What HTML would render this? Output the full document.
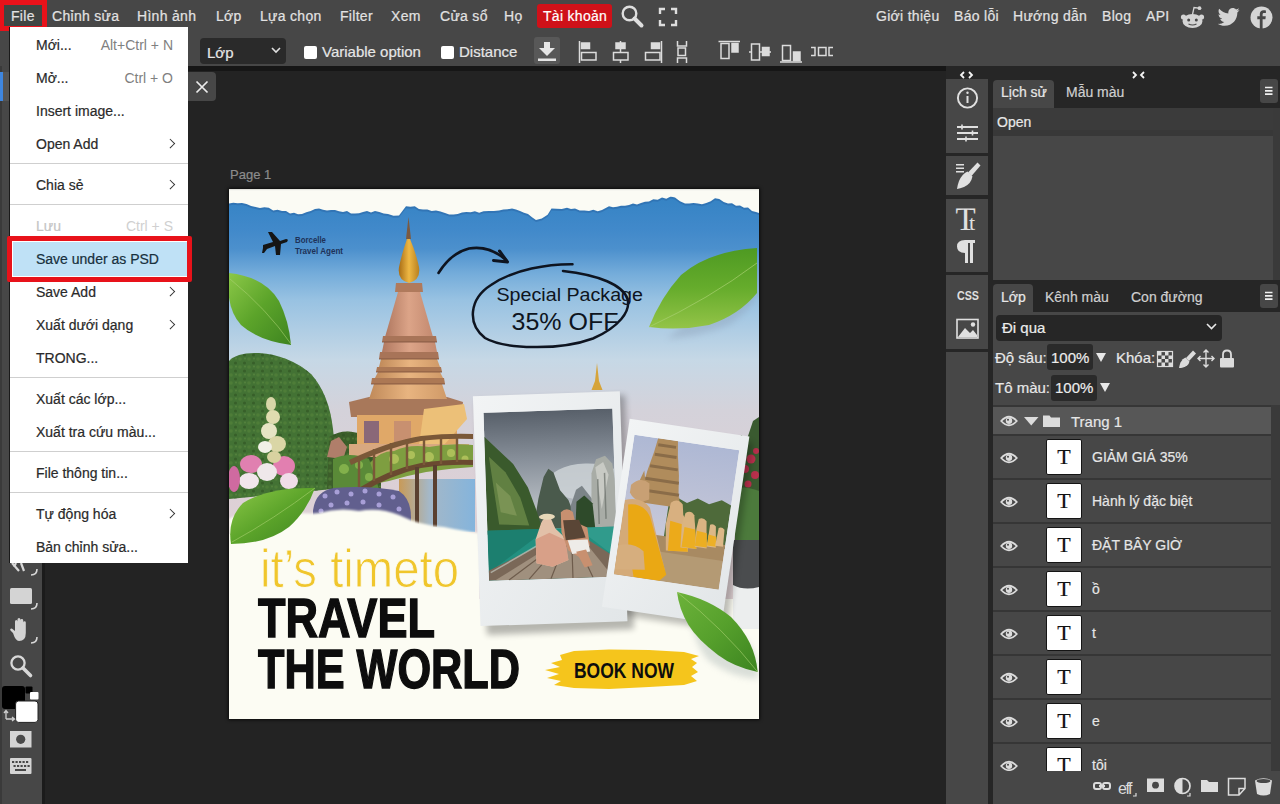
<!DOCTYPE html>
<html><head><meta charset="utf-8">
<style>
*{box-sizing:border-box;margin:0;padding:0}
html,body{width:1280px;height:804px;overflow:hidden;background:#232323;font-family:"Liberation Sans",sans-serif;position:relative}
.a{position:absolute}
.t{position:absolute;white-space:nowrap;line-height:1;font-size:14px;-webkit-text-stroke:0.2px currentColor}
#top{left:0;top:0;width:1280px;height:32px;background:#474747}
#opt{left:0;top:32px;width:1280px;height:34px;background:#474747}
#optline{left:0;top:66px;width:1280px;height:5px;background:#161616}
.mt{color:#e2e2e2;top:9px;letter-spacing:0.3px}
#ltool{left:0;top:66px;width:42px;height:738px;background:#474747}
#ltool2{left:0;top:66px;width:2px;height:738px;background:#3a3a3a}
#menu{left:10px;top:27px;width:178px;height:536px;background:#fff}
.mi{position:absolute;left:26px;color:#2a2a2a;font-size:14px;line-height:1;white-space:nowrap;-webkit-text-stroke:0.2px currentColor}
.sc{position:absolute;right:15px;color:#808080;font-size:14px;line-height:1;white-space:nowrap}
.sep{position:absolute;left:0;width:178px;height:1px;background:#cfcfcf}
.arr{position:absolute;left:156.5px;width:6.5px;height:6.5px;border-right:1.9px solid #333;border-top:1.9px solid #333;transform:rotate(45deg)}
</style></head><body>
<!-- TOP MENU BAR -->
<div id="top" class="a"></div>
<div class="a" style="left:0;top:0;width:47px;height:31px;background:#e8121a;border-radius:0 0 4px 0"></div>
<div class="a" style="left:4px;top:5px;width:38px;height:21px;background:#3f4542"></div>
<div class="t mt" style="left:11px">File</div>
<div class="t mt" style="left:52px">Chỉnh sửa</div>
<div class="t mt" style="left:137px">Hình ảnh</div>
<div class="t mt" style="left:216px">Lớp</div>
<div class="t mt" style="left:260px">Lựa chọn</div>
<div class="t mt" style="left:340px">Filter</div>
<div class="t mt" style="left:391px">Xem</div>
<div class="t mt" style="left:440px">Cửa sổ</div>
<div class="t mt" style="left:504px">Họ</div>
<div class="a" style="left:536.5px;top:3.5px;width:75.5px;height:24.5px;background:#cf1119;border-radius:3px"></div>
<div class="t mt" style="left:543px;color:#fff">Tài khoản</div>
<div class="t mt" style="left:876px">Giới thiệu</div>
<div class="t mt" style="left:954px">Báo lỗi</div>
<div class="t mt" style="left:1013px">Hướng dẫn</div>
<div class="t mt" style="left:1102px">Blog</div>
<div class="t mt" style="left:1146px">API</div>
<svg class="a" style="left:618px;top:2px" width="30" height="30" viewBox="0 0 30 30"><circle cx="11.5" cy="11.5" r="6.8" fill="none" stroke="#dedede" stroke-width="2.4"/><path d="M16.5 16.5 L23.5 23.5" stroke="#dedede" stroke-width="4" stroke-linecap="round"/></svg>
<svg class="a" style="left:656px;top:5px" width="24" height="24" viewBox="0 0 24 24" fill="none" stroke="#dedede" stroke-width="2.4"><path d="M4 9 V4 H9 M15 4 H20 V9 M20 15 V20 H15 M9 20 H4 V15"/></svg>
<svg class="a" style="left:1180px;top:5px" width="26" height="25" viewBox="0 0 26 25"><ellipse cx="12.5" cy="16" rx="10" ry="7" fill="#d4d4d4"/><circle cx="3.5" cy="12" r="2.6" fill="#d4d4d4"/><circle cx="21.5" cy="12" r="2.6" fill="#d4d4d4"/><circle cx="19.5" cy="3.2" r="1.9" fill="#d4d4d4"/><path d="M12.5 9.5 L14 2.5 L19 3.2" stroke="#d4d4d4" stroke-width="1.3" fill="none"/><circle cx="8.7" cy="15" r="1.5" fill="#474747"/><circle cx="16.3" cy="15" r="1.5" fill="#474747"/><path d="M8.5 19 Q12.5 21 16.5 19" stroke="#474747" stroke-width="1.1" fill="none"/></svg>
<svg class="a" style="left:1218px;top:7px" width="22" height="20" viewBox="0 0 24 20"><path fill="#d4d4d4" d="M23.5 2.4c-.9.4-1.8.6-2.8.8 1-.6 1.8-1.5 2.1-2.7-.9.6-2 1-3.1 1.2C18.8.7 17.5.1 16.1.1c-2.7 0-4.9 2.2-4.9 4.9 0 .4 0 .8.1 1.1C7.3 5.9 3.7 4 1.3 1 .9 1.7.6 2.6.6 3.5c0 1.7.9 3.2 2.2 4.1-.8 0-1.6-.2-2.2-.6v.1c0 2.4 1.7 4.4 3.9 4.8-.4.1-.8.2-1.3.2-.3 0-.6 0-.9-.1.6 2 2.4 3.4 4.6 3.4-1.7 1.3-3.8 2.1-6.1 2.1-.4 0-.8 0-1.2-.1 2.2 1.4 4.8 2.2 7.5 2.2 9.1 0 14-7.5 14-14v-.6c1-.7 1.8-1.6 2.4-2.6z"/></svg>
<svg class="a" style="left:1250px;top:6px" width="23" height="23" viewBox="0 0 23 23"><circle cx="11.5" cy="11.5" r="11" fill="#d4d4d4"/><path d="M12.6 23 V13.2 H15.4 L15.8 10.3 H12.6 V8.4 C12.6 7.5 12.9 6.9 14.1 6.9 H15.9 V4.4 C15.5 4.3 14.6 4.2 13.6 4.2 C11.3 4.2 9.8 5.6 9.8 8.1 V10.3 H7.3 V13.2 H9.8 V23 Z" fill="#474747"/></svg>


<!-- OPTIONS BAR -->
<div id="opt" class="a"></div>
<div class="a" style="left:200px;top:37.5px;width:86px;height:26.5px;background:#2a2a2a;border-radius:4px"></div>
<div class="t" style="left:207px;top:44.5px;color:#e6e6e6;font-size:15px">Lớp</div>
<svg class="a" style="left:270px;top:46px" width="12" height="8" viewBox="0 0 12 8"><path d="M2 2 L6 6 L10 2" fill="none" stroke="#e0e0e0" stroke-width="1.6"/></svg>
<div class="a" style="left:304px;top:45.5px;width:13px;height:13px;background:#fff;border-radius:2px"></div>
<div class="t" style="left:322px;top:44px;color:#e6e6e6;font-size:15px">Variable option</div>
<div class="a" style="left:441px;top:45.5px;width:13px;height:13px;background:#fff;border-radius:2px"></div>
<div class="t" style="left:459px;top:44px;color:#e6e6e6;font-size:15px">Distance</div>
<div class="a" style="left:534px;top:37px;width:26px;height:27px;background:#585858;border-radius:3px"></div>
<svg class="a" style="left:534px;top:37px" width="26" height="27" viewBox="0 0 26 27" fill="#e6e6e6"><path d="M10 5 H16 V11 H21 L13 19 L5 11 H10 Z"/><rect x="4" y="21.5" width="18" height="2.5"/></svg>
<svg class="a" style="left:575px;top:38px" width="270" height="28" viewBox="575 38 270 28" fill="none" stroke="#dcdcdc" stroke-width="1.5">
<path d="M579.5 41 V63"/><rect x="581.5" y="43" width="8" height="5.5" fill="#dcdcdc"/><rect x="581.5" y="52.5" width="14.5" height="7.5"/>
<path d="M620.5 41 V63"/><rect x="616" y="43" width="9" height="5.5" fill="#dcdcdc"/><rect x="613.5" y="52.5" width="14.5" height="7.5" fill="#474747"/>
<path d="M661.5 41 V63"/><rect x="651.5" y="43" width="8" height="5.5" fill="#dcdcdc"/><rect x="645.5" y="52.5" width="14.5" height="7.5"/>
<path d="M677.5 41 V46 H686.5 V41 M677.5 63 V58 H686.5 V63"/><rect x="678" y="48" width="7.5" height="7.5"/>
<path d="M718.5 41.5 H740"/><rect x="721" y="43.5" width="8" height="15"/><rect x="732" y="43.5" width="6" height="8.5" fill="#dcdcdc"/>
<path d="M749 52 H771"/><rect x="751.5" y="44" width="8" height="16" fill="#474747"/><rect x="762.5" y="47.5" width="6.5" height="8" fill="#dcdcdc"/>
<path d="M780 62 H802"/><rect x="782.5" y="45.5" width="8" height="15"/><rect x="793.5" y="52" width="6.5" height="8.5" fill="#dcdcdc"/>
<path d="M811 47.5 H815 V55.5 H811 M833 47.5 H829 V55.5 H833"/><rect x="818.5" y="47.5" width="7.5" height="8"/>
</svg>
<div id="optline" class="a"></div>

<!-- LEFT TOOLBAR -->
<div id="ltool" class="a"></div>
<div id="ltool2" class="a"></div>
<div class="a" style="left:0;top:72px;width:42px;height:29px;background:#555"></div>
<div class="a" style="left:0;top:72px;width:3px;height:29px;background:#3e86e0"></div>
<div class="a" style="left:9px;top:27px;width:1px;height:536px;background:#1a1a1a"></div>
<svg class="a" style="left:0;top:560px" width="42" height="220" viewBox="0 560 42 220">
<path d="M12 563 L19 571 M21 563 L24 571 M16 563 L14 567" stroke="#d8d8d8" stroke-width="2.2" fill="none"/>
<path d="M37 569 Q37 575 31 575" stroke="#d8d8d8" stroke-width="1.6" fill="none"/>
<rect x="10" y="588" width="22" height="16" rx="1.5" fill="#d4d4d4"/>
<path d="M37 603 Q37 609 31 609" stroke="#d8d8d8" stroke-width="1.6" fill="none"/>
<path d="M13 633 L10.5 630.5 Q9.5 628.5 11.8 628.4 L15 631 V621.5 Q15 620 16.3 620 Q17.5 620 17.5 621.5 V628 V619.5 Q17.5 618 19 618 Q20.4 618 20.4 619.5 V628 V620.3 Q20.4 619 21.8 619 Q23.2 619 23.2 620.3 V628 V622.5 Q23.2 621.2 24.5 621.2 Q25.8 621.2 25.8 622.5 V633 Q25.8 641 19 641 Q15.5 641 13 633 Z" fill="#d4d4d4"/>
<path d="M37 637 Q37 643 31 643" stroke="#d8d8d8" stroke-width="1.6" fill="none"/>
<circle cx="18" cy="663" r="6.6" fill="none" stroke="#d8d8d8" stroke-width="2.3"/>
<path d="M23 668 L30.5 675.5" stroke="#d8d8d8" stroke-width="3.6" stroke-linecap="round"/>
<rect x="2" y="686" width="23" height="23" rx="3" fill="#000"/>
<rect x="25.5" y="686.5" width="7" height="7" rx="1" fill="#000"/>
<rect x="30" y="692" width="8.5" height="7.5" rx="1" fill="#fff"/>
<rect x="15.6" y="701" width="22.4" height="21.4" rx="3" fill="#fff" stroke="#222" stroke-width="1"/>
<path d="M6 719 V711 M4 713 L6 710.5 L8 713 M6 719 H14 M12 717 L14.5 719 L12 721" stroke="#cfcfcf" stroke-width="1.3" fill="none"/>
<rect x="10" y="731" width="21.5" height="16.5" fill="#d4d4d4"/>
<circle cx="20.7" cy="739.3" r="4.6" fill="#4a4a4a"/>
<rect x="10" y="758" width="21.5" height="16" rx="1" fill="#d4d4d4"/>
<g fill="#474747"><rect x="12" y="761" width="2.2" height="2"/><rect x="15.5" y="761" width="2.2" height="2"/><rect x="19" y="761" width="2.2" height="2"/><rect x="22.5" y="761" width="2.2" height="2"/><rect x="26" y="761" width="2.2" height="2"/>
<rect x="13.5" y="765" width="2.2" height="2"/><rect x="17" y="765" width="2.2" height="2"/><rect x="20.5" y="765" width="2.2" height="2"/><rect x="24" y="765" width="2.2" height="2"/><rect x="27.5" y="765" width="2.2" height="2"/>
<rect x="15" y="769" width="11" height="2"/></g>
</svg>
<div class="a" style="left:42px;top:66px;width:3px;height:738px;background:#1b1b1b"></div>
<!-- CANVAS AREA -->
<div class="a" style="left:188px;top:72px;width:28px;height:29px;background:#474747;border-radius:0 4px 4px 0"></div>
<svg class="a" style="left:194px;top:79px" width="16" height="16" viewBox="0 0 16 16"><path d="M2.5 2.5 L13.5 13.5 M13.5 2.5 L2.5 13.5" stroke="#ececec" stroke-width="1.7"/></svg>
<div class="t" style="left:230px;top:168px;color:#8c8c8c;font-size:13px">Page 1</div>
<div id="poster" class="a" style="left:229px;top:189px;width:530px;height:530px;background:#fbfbf3;overflow:hidden;box-shadow:0 0 3px 1px rgba(0,0,0,0.7)"><!--POSTER-->
<svg width="530" height="530" viewBox="0 0 530 530" style="position:absolute;left:0;top:0">
<defs>
<linearGradient id="sky" x1="0" y1="0" x2="0" y2="1">
<stop offset="0" stop-color="#3583c4"/><stop offset="0.08" stop-color="#4189ca"/><stop offset="0.129" stop-color="#4c90cd"/><stop offset="0.19" stop-color="#74acda"/><stop offset="0.256" stop-color="#98c2e2"/><stop offset="0.405" stop-color="#c6d8e6"/><stop offset="0.53" stop-color="#d4d2da"/><stop offset="0.726" stop-color="#dcd0d6"/><stop offset="1" stop-color="#e2d4d6"/>
</linearGradient>
<linearGradient id="tower" x1="0" y1="0" x2="1" y2="0">
<stop offset="0" stop-color="#b07860"/><stop offset="0.5" stop-color="#dca488"/><stop offset="1" stop-color="#c48a70"/>
</linearGradient>
<linearGradient id="tower2" x1="0" y1="0" x2="1" y2="0">
<stop offset="0" stop-color="#c08a5a"/><stop offset="0.5" stop-color="#e8b480"/><stop offset="1" stop-color="#d09a68"/>
</linearGradient>
<linearGradient id="gold" x1="0" y1="0" x2="1" y2="0">
<stop offset="0" stop-color="#a86c14"/><stop offset="0.5" stop-color="#eeb844"/><stop offset="1" stop-color="#b88020"/>
</linearGradient>
<linearGradient id="leafR" x1="0" y1="0" x2="0" y2="1">
<stop offset="0" stop-color="#4e9a22"/><stop offset="0.5" stop-color="#66ac2c"/><stop offset="1" stop-color="#94c448"/>
</linearGradient>
<linearGradient id="leafR2" x1="0" y1="0" x2="1" y2="1"><stop offset="0" stop-color="#6cb23a"/><stop offset="0.5" stop-color="#56a02c"/><stop offset="1" stop-color="#3c8420"/></linearGradient>
<linearGradient id="leafL" x1="0" y1="0" x2="1" y2="1">
<stop offset="0" stop-color="#8cc848"/><stop offset="0.5" stop-color="#5ca42a"/><stop offset="1" stop-color="#3e8420"/>
</linearGradient>
<linearGradient id="p1sky" x1="0" y1="0" x2="0" y2="1">
<stop offset="0" stop-color="#58606a"/><stop offset="0.3" stop-color="#8a929c"/><stop offset="0.55" stop-color="#b4bac0"/><stop offset="0.7" stop-color="#c8ccd0"/>
</linearGradient>
<linearGradient id="p2sky" x1="0" y1="0" x2="0" y2="1">
<stop offset="0" stop-color="#aeb8d4"/><stop offset="1" stop-color="#d4d0da"/>
</linearGradient>
<linearGradient id="water" x1="0" y1="0" x2="1" y2="0">
<stop offset="0" stop-color="#c89a58"/><stop offset="0.4" stop-color="#a4b8c8"/><stop offset="1" stop-color="#84b4dc"/>
</linearGradient>
<linearGradient id="frame" x1="0" y1="0" x2="1" y2="1">
<stop offset="0" stop-color="#f2f4f5"/><stop offset="1" stop-color="#e2e6e8"/>
</linearGradient>
<pattern id="hedgetex" width="9" height="8" patternUnits="userSpaceOnUse"><circle cx="2" cy="2" r="1.8" fill="#55843a" opacity="0.6"/><circle cx="6.5" cy="6" r="1.6" fill="#2e5222" opacity="0.6"/><circle cx="7" cy="1.5" r="1" fill="#6e9848" opacity="0.4"/></pattern>
<filter id="blur1" x="-20%" y="-20%" width="140%" height="140%"><feGaussianBlur stdDeviation="3"/></filter>
<filter id="blur2" x="-20%" y="-20%" width="140%" height="140%"><feGaussianBlur stdDeviation="1.2"/></filter>
</defs>
<rect x="0" y="0" width="530" height="530" fill="#fcfcf3"/>
<rect x="0" y="8" width="530" height="402" fill="url(#sky)"/>
<!-- torn top paper -->
<path d="M0 0 H530 L530.0 24.0 L527.0 23.0 L523.0 22.0 L519.0 18.6 L515.0 18.7 L511.0 16.6 L507.0 16.7 L503.0 14.3 L499.0 14.6 L494.7 13.1 L490.3 10.0 L486.0 9.3 L481.7 12.2 L477.3 13.9 L473.0 15.3 L468.8 14.6 L464.5 14.1 L460.2 14.6 L456.0 14.6 L451.0 12.3 L446.0 8.6 L441.7 7.6 L437.3 9.8 L433.0 8.6 L428.7 10.8 L424.3 10.2 L420.0 12.6 L416.0 12.8 L412.0 14.1 L408.0 15.4 L404.0 14.6 L400.0 16.0 L396.0 16.8 L392.0 16.7 L388.0 17.8 L384.0 18.2 L380.0 17.3 L373.0 21.0 L368.7 22.2 L364.3 20.8 L360.0 21.9 L355.3 21.5 L350.7 21.5 L346.0 19.5 L342.0 20.0 L338.0 18.8 L332.8 20.1 L327.7 19.7 L322.5 19.5 L318.6 25.8 L312.8 29.4 L307.0 31.0 L303.0 28.2 L299.0 25.0 L295.0 23.8 L291.0 21.9 L287.0 20.6 L283.0 19.5 L278.7 20.2 L274.3 20.4 L270.0 21.5 L264.8 22.1 L259.7 21.9 L254.5 22.3 L250.2 23.7 L245.9 22.2 L241.6 23.2 L237.3 22.9 L233.0 23.4 L228.7 25.0 L224.5 25.6 L220.2 25.4 L216.0 24.0 L211.5 22.6 L207.0 21.5 L202.7 21.9 L198.3 20.6 L194.0 20.6 L189.9 19.9 L185.8 17.2 L181.4 17.7 L177.0 17.2 L170.0 26.5 L164.5 26.7 L159.0 25.0 L154.7 24.5 L150.3 22.9 L146.0 22.0 L142.0 23.4 L138.0 21.9 L134.0 23.1 L130.0 24.3 L126.0 24.6 L122.0 24.5 L118.0 22.1 L114.0 22.9 L110.0 22.3 L106.0 21.0 L102.0 20.9 L98.0 21.5 L94.0 20.7 L90.0 19.4 L86.0 20.0 L81.7 22.0 L77.3 23.3 L73.0 25.0 L69.0 25.2 L65.0 23.7 L61.0 24.4 L57.0 22.0 L53.0 22.0 L48.6 20.8 L44.2 21.5 L39.8 18.8 L35.4 18.3 L31.0 19.0 L26.6 18.0 L22.1 16.9 L17.5 15.0 L13.0 14.0 L8.7 14.3 L4.3 13.8 L0.0 14.6 Z" fill="#2c68a8" opacity="0.55" transform="translate(0 2)"/>
<path d="M0 0 H530 L530.0 24.0 L527.0 23.0 L523.0 22.0 L519.0 18.6 L515.0 18.7 L511.0 16.6 L507.0 16.7 L503.0 14.3 L499.0 14.6 L494.7 13.1 L490.3 10.0 L486.0 9.3 L481.7 12.2 L477.3 13.9 L473.0 15.3 L468.8 14.6 L464.5 14.1 L460.2 14.6 L456.0 14.6 L451.0 12.3 L446.0 8.6 L441.7 7.6 L437.3 9.8 L433.0 8.6 L428.7 10.8 L424.3 10.2 L420.0 12.6 L416.0 12.8 L412.0 14.1 L408.0 15.4 L404.0 14.6 L400.0 16.0 L396.0 16.8 L392.0 16.7 L388.0 17.8 L384.0 18.2 L380.0 17.3 L373.0 21.0 L368.7 22.2 L364.3 20.8 L360.0 21.9 L355.3 21.5 L350.7 21.5 L346.0 19.5 L342.0 20.0 L338.0 18.8 L332.8 20.1 L327.7 19.7 L322.5 19.5 L318.6 25.8 L312.8 29.4 L307.0 31.0 L303.0 28.2 L299.0 25.0 L295.0 23.8 L291.0 21.9 L287.0 20.6 L283.0 19.5 L278.7 20.2 L274.3 20.4 L270.0 21.5 L264.8 22.1 L259.7 21.9 L254.5 22.3 L250.2 23.7 L245.9 22.2 L241.6 23.2 L237.3 22.9 L233.0 23.4 L228.7 25.0 L224.5 25.6 L220.2 25.4 L216.0 24.0 L211.5 22.6 L207.0 21.5 L202.7 21.9 L198.3 20.6 L194.0 20.6 L189.9 19.9 L185.8 17.2 L181.4 17.7 L177.0 17.2 L170.0 26.5 L164.5 26.7 L159.0 25.0 L154.7 24.5 L150.3 22.9 L146.0 22.0 L142.0 23.4 L138.0 21.9 L134.0 23.1 L130.0 24.3 L126.0 24.6 L122.0 24.5 L118.0 22.1 L114.0 22.9 L110.0 22.3 L106.0 21.0 L102.0 20.9 L98.0 21.5 L94.0 20.7 L90.0 19.4 L86.0 20.0 L81.7 22.0 L77.3 23.3 L73.0 25.0 L69.0 25.2 L65.0 23.7 L61.0 24.4 L57.0 22.0 L53.0 22.0 L48.6 20.8 L44.2 21.5 L39.8 18.8 L35.4 18.3 L31.0 19.0 L26.6 18.0 L22.1 16.9 L17.5 15.0 L13.0 14.0 L8.7 14.3 L4.3 13.8 L0.0 14.6 Z" fill="#fbfbf4"/>
<rect x="0" y="0" width="530" height="1.2" fill="#e4e4de"/>
<!-- right dark tree strip -->
<path d="M506 262 L512 246 L518 250 L524 232 L530 228 V405 H506 Z" fill="#3a5a30"/>
<g fill="#b8304c"><circle cx="522" cy="270" r="4.5"/><circle cx="516" cy="280" r="4"/><circle cx="526" cy="286" r="4"/><circle cx="519" cy="295" r="3.5"/><circle cx="527" cy="262" r="3"/></g>
<path d="M506 300 Q515 296 530 302 V352 H506 Z" fill="#4c7a3c"/>
<rect x="504" y="351" width="26" height="50" fill="#4a4c4e"/>
<path d="M504 396 Q515 402 530 398 V440 H504 Z" fill="#eceeee"/>
<!-- small spire right -->
<path d="M368 174 L366 192 L362.5 201 H373.5 L370 192 Z" fill="#d6a43a"/>
<!-- green hedge -->
<path d="M0 172 Q8 163 30 164 Q60 166 82 185 Q100 205 104 240 Q108 270 104 300 L0 310 Z" fill="#437234"/><path d="M0 172 Q8 163 30 164 Q60 166 82 185 Q100 205 104 240 Q108 270 104 300 L0 310 Z" fill="url(#hedgetex)"/>


<!-- bushes between hedge and pagoda -->
<path d="M100 248 Q115 238 135 246 Q150 256 152 280 L152 300 H98 Z" fill="#3c5e2a"/><path d="M100 248 Q115 238 135 246 Q150 256 152 280 L152 300 H98 Z" fill="url(#hedgetex)"/>
<path d="M98 268 L102 252 L110 248 L118 258 L114 270 Z" fill="#b07e6a"/>
<!-- temple building -->
<path d="M120 213 L140 208 H218 L234 213 L232 228 H122 Z" fill="#a8785a"/>
<path d="M128 226 H228 V256 H128 Z" fill="#e0a868"/>
<path d="M135 232 H150 V254 H135 Z" fill="#8a6878"/><path d="M165 232 H182 V254 H165 Z" fill="#c89070"/>
<path d="M195 220 L235 215 L238 230 L215 256 H190 Z" fill="#ecc078"/>
<path d="M120 255 H240 V268 H120 Z" fill="#d8a880"/>
<!-- pagoda tower -->
<path d="M179.5 28 L177 50 L182 50 Z" fill="#7a5a42"/>
<path d="M178 50 Q173 64 170 78 Q168 91 180 94 Q192 91 190 78 Q187 64 181 50 Z" fill="url(#gold)"/>
<path d="M167 94 H193 L194 103 H166 Z" fill="#b07a5c"/>
<path d="M169 103 H191 L204 148 H156 Z" fill="url(#tower)"/>
<path d="M154 147 H207 L208 153 H153 Z" fill="#a87458"/>
<path d="M155 153 H206 L208 163 H153 Z" fill="url(#tower)"/>
<path d="M151 163 H209 L210 170 H150 Z" fill="#a87458"/>
<path d="M152 170 H208 L211 178 H150 Z" fill="url(#tower2)"/>
<path d="M148 178 H212 L213 183 H147 Z" fill="#ac7854"/>
<path d="M149 183 H211 L214 189 H146 Z" fill="url(#tower2)"/>
<path d="M143 189 H215 L216 195 H142 Z" fill="#ac7854"/>
<path d="M145 195 H213 L218 210 H140 Z" fill="url(#tower2)"/>
<!-- under-bridge greenery -->
<path d="M140 275 Q150 262 165 262 Q180 255 200 258 Q220 254 244 256 V278 Q200 280 160 292 L140 296 Z" fill="#7e9e40"/><g fill="#b8c860" opacity="0.8"><circle cx="165" cy="270" r="5"/><circle cx="182" cy="266" r="4"/><circle cx="200" cy="268" r="5"/><circle cx="222" cy="264" r="4"/><circle cx="236" cy="270" r="3.5"/></g><path d="M104 270 Q120 262 140 270 L150 300 H104 Z" fill="#5a8a38"/><g fill="#8cba50" opacity="0.8"><circle cx="115" cy="280" r="5"/><circle cx="130" cy="276" r="4"/><circle cx="140" cy="288" r="4"/></g>
<path d="M153 153 H208 M150 170 H210 M147 183 H213 M142 195 H216" stroke="#7a4e3a" stroke-width="1" opacity="0.8"/>
<!-- bridge -->
<path d="M120 271 Q160 252 192 247 Q220 244 244 245 V250 Q215 249 192 252 Q160 258 122 276 Z" fill="#7a5838"/>
<path d="M128 300 Q160 280 192 274 Q220 270 244 271 V276 Q220 275 192 279 Q162 286 132 304 Z" fill="#6a4a30"/>
<path d="M130 268 V300 M145 260 V292 M162 254 V286 M178 250 V280 M195 248 V276 M212 247 V275 M228 246 V273" stroke="#7a5838" stroke-width="2.4"/>
<!-- water -->
<rect x="170" y="290" width="76" height="53" fill="url(#water)"/>
<path d="M188 278 V335 M206 276 V338" stroke="#5a4030" stroke-width="4"/>
<!-- flowers -->
<g>
<ellipse cx="42" cy="215" rx="5" ry="7" fill="#d8d6a8"/><ellipse cx="44" cy="228" rx="7" ry="7" fill="#e0dcb0"/><ellipse cx="40" cy="242" rx="8" ry="8" fill="#e6e4c4"/><ellipse cx="48" cy="255" rx="9" ry="8" fill="#dad6a6"/>
<ellipse cx="36" cy="258" rx="7" ry="6" fill="#f2f0e6"/>
<ellipse cx="22" cy="275" rx="11" ry="9" fill="#e080b0"/><ellipse cx="55" cy="277" rx="11" ry="10" fill="#e27fb0"/><ellipse cx="38" cy="283" rx="10" ry="9" fill="#efe8ea"/>
<ellipse cx="20" cy="292" rx="10" ry="8" fill="#f1e6ec"/><ellipse cx="60" cy="292" rx="9" ry="8" fill="#f0dde8"/><ellipse cx="5" cy="290" rx="6" ry="13" fill="#cf6aa0"/>
<ellipse cx="45" cy="268" rx="7" ry="6" fill="#d8d2a0"/>
</g>
<!-- purple bush -->
<path d="M84 322 Q86 302 105 299 Q140 296 170 302 Q182 310 182 328 V335 H84 Z" fill="#615f8e"/>
<g fill="#b0a6e0" opacity="0.9"><circle cx="96" cy="307" r="2.5"/><circle cx="108" cy="303" r="2.5"/><circle cx="122" cy="305" r="2.5"/><circle cx="136" cy="302" r="2.5"/><circle cx="150" cy="305" r="2.5"/><circle cx="164" cy="308" r="2.5"/><circle cx="102" cy="316" r="2.5"/><circle cx="118" cy="314" r="2.5"/><circle cx="134" cy="313" r="2.5"/><circle cx="150" cy="316" r="2.5"/><circle cx="170" cy="320" r="2.5"/><circle cx="92" cy="322" r="2.5"/></g>
<!-- white foam -->
<path d="M0 330 Q20 318 50 320 Q70 326 90 324 Q110 318 130 322 Q150 318 170 326 Q190 336 215 338 Q235 342 250 344 V530 H0 Z" fill="#fcfcf3" filter="url(#blur2)"/>
<path d="M0 345 Q100 335 250 350 V530 H0 Z" fill="#fcfcf3"/>
<!-- left top leaf -->
<path d="M0 84 Q36 88 50 112 Q60 132 62 156 Q30 152 12 136 Q-4 118 0 84 Z" fill="url(#leafL)"/>
<path d="M1 90 Q38 120 62 155" stroke="#a8d070" stroke-width="1" fill="none" opacity="0.6"/>
<!-- left bottom leaf -->
<path d="M2 355 Q-2 330 14 314 Q40 298 86 299 Q78 322 60 338 Q38 355 2 355 Z" fill="url(#leafL)"/>
<path d="M3 353 Q45 330 86 299" stroke="#a8d070" stroke-width="1" fill="none" opacity="0.6"/>
<!-- right top leaf -->
<path d="M456 143 Q430 148 428 144" fill="none"/>
<path d="M438 150 Q470 148 500 136 Q526 118 530 100 V70 Z" fill="#8a9ab0" opacity="0.35" filter="url(#blur1)"/>
<path d="M420 138 Q432 108 452 86 Q480 62 528 59 V104 Q510 126 480 136 Q450 142 420 138 Z" fill="url(#leafR)"/>
<path d="M420 138 Q480 110 528 74" stroke="#a8d070" stroke-width="1" fill="none" opacity="0.7"/>
<!-- polaroid shadows -->
<path d="M248 212 L396 206 L405 440 L258 446 Z" fill="#000" opacity="0.28" filter="url(#blur1)"/>
<path d="M404 236 L524 254 L498 442 L378 424 Z" fill="#000" opacity="0.25" filter="url(#blur1)"/>
<!-- polaroid 1 -->
<g transform="translate(243.9 207.2) rotate(-1.9)">
<rect x="0" y="0" width="147" height="230" fill="url(#frame)"/>
<svg x="10" y="17" width="129" height="168" viewBox="0 0 129 168">
<rect width="129" height="168" fill="url(#p1sky)"/>
<ellipse cx="100" cy="72" rx="38" ry="18" fill="#cdd2d6" opacity="0.85"/>
<path d="M46 118 L52 88 L58 66 L63 58 L68 62 L74 80 L82 90 L92 118 Z" fill="#4a5a4c"/>
<path d="M84 96 L90 80 L96 76 L106 90 L108 118 H84 Z" fill="#7c8488"/>
<path d="M104 120 L106 64 L111 50 L120 47 L127 55 L129 70 V120 Z" fill="#a8aca6"/>
<path d="M110 58 L118 53 L123 66 L115 100 Z" fill="#c8cac4"/>
<path d="M112 70 V115 M119 64 V110" stroke="#6a706a" stroke-width="1.5" opacity="0.7"/>
<path d="M88 120 L90 92 L98 86 L106 94 L108 120 Z" fill="#2e4a2a"/>
<path d="M0 24 L12 36 L28 52 L42 76 L50 100 L56 122 H0 Z" fill="#3a5a2c"/>
<path d="M4 44 L20 60 L34 86 L42 114 L12 112 Z" fill="#6c8a48" opacity="0.8"/>
<path d="M10 70 L24 84 L30 104 L14 100 Z" fill="#8aa060" opacity="0.6"/>
<rect x="0" y="118" width="129" height="50" fill="#229080"/>
<path d="M0 118 H60 L0 160 Z" fill="#1a7868" opacity="0.7"/>
<path d="M90 118 H129 V150 Z" fill="#3aa494" opacity="0.6"/>
<path d="M0 168 V158 L56 132 L100 130 L129 150 V168 Z" fill="#7a6858"/>
<path d="M6 168 L58 138 L100 136 L124 168 Z" fill="#a0907e"/>
<path d="M20 168 L60 140 M40 168 L66 140 M62 168 L74 140 M84 168 L84 140 M104 168 L92 140" stroke="#6e5c4c" stroke-width="1.2"/>
<path d="M2 160 L54 132" stroke="#cfd8d0" stroke-width="1.5" opacity="0.6"/>
<path d="M54 112 Q58 104 64 108 L68 118 L76 126 L80 150 L64 156 L48 152 L48 128 Z" fill="#e2c0a8"/>
<path d="M48 128 L62 122 L78 130 L80 150 L64 156 L48 152 Z" fill="#d8a088"/>
<ellipse cx="60" cy="106" rx="8" ry="3" fill="#e6d8b8"/>
<path d="M74 102 Q80 96 86 102 L88 112 L100 118 L102 136 L92 148 L80 140 L74 122 Z" fill="#c89070"/>
<path d="M76 110 L92 110 L98 128 L78 130 Z" fill="#5a4636"/>
<path d="M80 130 H100 L102 142 L84 144 Z" fill="#eeece8"/>
<path d="M88 142 L96 158 L104 156 L98 140 Z" fill="#c89070"/>
</svg>
</g>
<!-- polaroid 2 -->
<g transform="translate(400.7 229.8) rotate(8.4)">
<rect x="0" y="0" width="121" height="190" fill="url(#frame)"/>
<svg x="7" y="15" width="106" height="141" viewBox="0 0 106 141">
<rect width="106" height="141" fill="url(#p2sky)"/>
<path d="M44 62 L52 56 L62 60 L72 54 L84 58 L96 52 L106 56 V100 H44 Z" fill="#4e6a3a"/>
<path d="M24 0 H44 L46 14 L50 34 L54 66 H14 L18 34 L22 14 Z" fill="#b08c5c"/>
<path d="M25 5 H43 V8 H25 Z M23 15 H45 V18 H23 Z M20 27 H48 V30 H20 Z M17 40 H51 V43 H17 Z M15 52 H53 V55 H15 Z" fill="#8a6c48"/>
<path d="M12 44 L15 34 L18 46 Z M50 66 L53 54 L56 66 Z" fill="#b08c5c"/>
<path d="M0 110 H106 V141 H0 Z" fill="#b49a74"/>
<path d="M0 96 H106 V112 H0 Z" fill="#a88a62"/>
<path d="M4 50 Q12 40 22 46 L24 62 L16 66 Q8 64 4 58 Z" fill="#c8a074"/>
<path d="M0 66 Q16 60 26 70 L34 90 L50 130 L44 141 H0 Z" fill="#d4aa78"/>
<path d="M4 70 Q20 66 28 80 L52 134 L46 141 L20 141 L10 110 Z" fill="#eaa814"/>
<path d="M0 112 Q14 106 26 114 L30 132 L0 136 Z" fill="#d6ae7e"/>
<path d="M46 62 Q52 56 58 62 L60 72 L66 82 L70 108 L48 110 L44 84 Z" fill="#d8b080"/>
<path d="M48 80 L62 82 L70 108 L50 110 Z" fill="#ecaa1a"/>
<path d="M62 70 Q67 66 71 71 L73 80 L78 104 L62 105 L60 82 Z" fill="#dab482"/><path d="M63 84 L74 85 L78 104 L63 104 Z" fill="#ecae22"/>
<path d="M76 74 Q80 71 84 75 L85 82 L88 102 L76 102 L75 84 Z" fill="#dab482"/><path d="M76 86 L86 87 L88 101 L76 101 Z" fill="#ecae22"/>
<path d="M88 78 Q91 76 94 79 L95 86 L97 100 L88 100 Z" fill="#dcb888"/><path d="M88 88 L96 89 L97 99 L88 99 Z" fill="#ecb028"/>
<path d="M97 80 Q100 78 103 81 L104 98 H96 Z" fill="#dcb888"/>
</svg>
</g>
<!-- right bottom leaf -->
<path d="M458 410 Q500 430 520 455 Q530 470 529 490 Q500 488 478 470 Q462 450 458 410 Z" fill="#9aa8a8" opacity="0.35" filter="url(#blur1)"/>
<path d="M448 403 Q480 410 502 428 Q526 452 528.7 483 Q505 478 489 466 Q468 450 459.5 436 Q450 420 448 403 Z" fill="url(#leafR2)"/>
<path d="M448 403 Q495 440 528.7 483" stroke="#a8d070" stroke-width="1" fill="none" opacity="0.6"/>
<!-- arrow -->
<path d="M209.5 84 Q222 64 240 59.5 Q260 56 277 71" stroke="#0e1420" stroke-width="2.6" fill="none" stroke-linecap="round"/>
<path d="M270.5 62 L278.5 73 L264.5 71.5" stroke="#0e1420" stroke-width="3" fill="none" stroke-linecap="round" stroke-linejoin="round"/>
<!-- ellipse -->
<path d="M343.5 75.2 C320 75 285 80 262 96 C240 110 238 135 256 149 C275 160 330 162 364 149.5 C390 138 402 122 398.5 110 C394 96 370 86 334 82" stroke="#0e1420" stroke-width="2.5" fill="none" stroke-linecap="round"/>
<text x="267.5" y="112.4" font-family="Liberation Sans" font-size="18.3" fill="#0e1420" textLength="146.5" lengthAdjust="spacingAndGlyphs">Special Package</text>
<text x="282.5" y="141.2" font-family="Liberation Sans" font-size="24.7" fill="#0e1420" textLength="107" lengthAdjust="spacingAndGlyphs">35% OFF</text>
<!-- plane + logo -->
<path d="M34 56 L44 53 L39 43 L43 43 L51 52 L57 50 Q60 50 58 53 L52 55 L51 66 L47 66 L46 57 L38 60 L35 64 L33 64 L34 59 Z" fill="#151515"/>
<text x="66" y="54" font-family="Liberation Sans" font-weight="bold" font-size="9.5" fill="#1e3258" textLength="31" lengthAdjust="spacingAndGlyphs">Borcelle</text>
<text x="66" y="65" font-family="Liberation Sans" font-weight="bold" font-size="9.5" fill="#1e3258" textLength="48" lengthAdjust="spacingAndGlyphs">Travel Agent</text>
<!-- texts -->
<text x="31" y="398" font-family="Liberation Sans" font-size="54" fill="#f0c62c" stroke="#fcfcf3" stroke-width="0.9" textLength="199" lengthAdjust="spacingAndGlyphs">it’s timeto</text>
<text x="29" y="448.3" font-family="Liberation Sans" font-weight="bold" font-size="55" fill="#0d0d0d" stroke="#0d0d0d" stroke-width="1.4" textLength="177" lengthAdjust="spacingAndGlyphs">TRAVEL</text>
<text x="29" y="498.6" font-family="Liberation Sans" font-weight="bold" font-size="55" fill="#0d0d0d" stroke="#0d0d0d" stroke-width="1.4" textLength="262" lengthAdjust="spacingAndGlyphs">THE WORLD</text>
<!-- book now -->
<path d="M331 466 L345 462 L380 460.5 L420 461 L455 463 L470 467 L462 470 L468 474 L463 478 L469 483 L462 487 L468 492 L455 496 L420 498 L380 500 L345 499 L325 496 L332 492 L318 489 L330 485 L316 481 L331 478 L322 474 L333 471 Z" fill="#f5c51c"/>
<text x="345" y="489.3" font-family="Liberation Sans" font-weight="bold" font-size="22.5" fill="#0d0d0d" textLength="100" lengthAdjust="spacingAndGlyphs">BOOK NOW</text>
</svg>
<!--/POSTER-->
</div>



<!-- RIGHT SIDE -->
<div class="a" style="left:946px;top:66px;width:334px;height:738px;background:#262626"></div>
<div class="a" style="left:946px;top:79px;width:42px;height:74px;background:#474747"></div>
<div class="a" style="left:946px;top:156px;width:42px;height:39px;background:#474747"></div>
<div class="a" style="left:946px;top:198.5px;width:42px;height:73.5px;background:#474747"></div>
<div class="a" style="left:946px;top:275px;width:42px;height:73.5px;background:#474747"></div>
<div class="a" style="left:946px;top:352px;width:42px;height:452px;background:#474747"></div>
<svg class="a" style="left:946px;top:66px" width="42" height="290" viewBox="946 66 42 290">
<path d="M964 72 L961 75 L964 78 M969 72 L972 75 L969 78" stroke="#f4f4f4" stroke-width="1.8" fill="none"/>
<circle cx="967.5" cy="98" r="9.6" fill="none" stroke="#e0e0e0" stroke-width="1.9"/>
<rect x="966.5" y="96" width="2" height="7" fill="#e0e0e0"/><circle cx="967.5" cy="92.8" r="1.2" fill="#e0e0e0"/>
<g stroke="#e0e0e0" stroke-width="2"><path d="M957 127 H978 M957 133 H978 M957 139 H978"/><path d="M962 124.5 V129.5 M972.5 130.5 V135.5 M966 136.5 V141.5" stroke-width="1.6"/></g>
<g fill="#e0e0e0"><rect x="956" y="164" width="8" height="1.5"/><rect x="956" y="167.5" width="8" height="1.5"/><rect x="956" y="171" width="8" height="1.5"/>
<path d="M977.5 162.5 L980.5 165.5 L971.5 176 L968 172.5 Z"/><path d="M967.5 171.5 L972.5 176.5 Q971 184 964 187 Q960 188.5 957 189 Q957.5 185 959 181 Q962 174 967.5 171.5 Z"/></g>
<text x="955.5" y="229.5" font-family="Liberation Serif" font-size="33" fill="#e0e0e0" style="text-rendering:geometricPrecision">T</text><text x="969" y="229.5" font-family="Liberation Serif" font-size="22" fill="#e0e0e0">t</text>
<path d="M965 240 H975 V243 H973 V263 H970 V243 H968 V263 H965 V253 Q957 253 957 246.5 Q957 240 965 240 Z" fill="#e0e0e0"/>
<text x="957" y="299.5" font-family="Liberation Sans" font-weight="bold" font-size="13" fill="#e0e0e0" textLength="22" lengthAdjust="spacingAndGlyphs">CSS</text>
<rect x="957" y="319.5" width="21" height="18.5" fill="none" stroke="#e0e0e0" stroke-width="1.6"/><path d="M958 337 L965 328 L970 333 L973 330 L977 335 V337 Z" fill="#e0e0e0"/><circle cx="973" cy="324.5" r="2.2" fill="#e0e0e0"/>
</svg>
<svg class="a" style="left:1130px;top:66px" width="20" height="14" viewBox="0 0 20 14"><path d="M3 6 L6 9 L3 12 M14 6 L11 9 L14 12" stroke="#f4f4f4" stroke-width="1.8" fill="none"/></svg>
<!-- history panel -->
<div class="a" style="left:993px;top:80px;width:61px;height:28px;background:#474747;border-radius:4px 4px 0 0"></div>
<div class="t" style="left:1001px;top:85px;color:#e8e8e8;font-size:14px">Lịch sử</div>
<div class="t" style="left:1066px;top:85px;color:#cfcfcf;font-size:14px">Mẫu màu</div>
<div class="a" style="left:1259.5px;top:79px;width:18px;height:24px;background:#474747;border-radius:3px"></div>
<svg class="a" style="left:1259.5px;top:79px" width="18" height="24" viewBox="0 0 18 24"><path d="M5 8.5 H12.5 M5 11.8 H12.5 M5 15.1 H12.5" stroke="#f0f0f0" stroke-width="1.7"/></svg>
<div class="a" style="left:993px;top:108px;width:287px;height:172px;background:#474747"></div>
<div class="a" style="left:993px;top:108px;width:280px;height:22px;background:#3b3b3b"></div>
<div class="a" style="left:993px;top:130px;width:280px;height:6px;background:#383838"></div>
<div class="a" style="left:1273px;top:108px;width:7px;height:172px;background:#3a3a3a"></div>
<div class="t" style="left:997px;top:115px;color:#e8e8e8;font-size:14px">Open</div>
<!-- layers panel -->
<div class="a" style="left:993px;top:284px;width:40px;height:28px;background:#474747;border-radius:4px 4px 0 0"></div>
<div class="t" style="left:1001px;top:290px;color:#e8e8e8;font-size:14px">Lớp</div>
<div class="t" style="left:1045px;top:290px;color:#cfcfcf;font-size:14px">Kênh màu</div>
<div class="t" style="left:1131px;top:290px;color:#cfcfcf;font-size:14px">Con đường</div>
<div class="a" style="left:1259.5px;top:284px;width:18px;height:24px;background:#474747;border-radius:3px"></div>
<svg class="a" style="left:1259.5px;top:284px" width="18" height="24" viewBox="0 0 18 24"><path d="M5 8.5 H12.5 M5 11.8 H12.5 M5 15.1 H12.5" stroke="#f0f0f0" stroke-width="1.7"/></svg>
<div class="a" style="left:993px;top:312px;width:287px;height:492px;background:#474747"></div>
<div class="a" style="left:996px;top:314.5px;width:225.5px;height:26px;background:#262626;border-radius:4px"></div>
<div class="t" style="left:1002px;top:320px;color:#ececec;font-size:15px">Đi qua</div>
<svg class="a" style="left:1205px;top:322px" width="13" height="9" viewBox="0 0 13 9"><path d="M2 2 L6.5 6.5 L11 2" fill="none" stroke="#e8e8e8" stroke-width="1.6"/></svg>
<div class="t" style="left:995px;top:350px;color:#e8e8e8;font-size:15px">Độ sâu:</div>
<div class="a" style="left:1046.5px;top:344px;width:46px;height:26px;background:#2a2a2a;border-radius:3px"></div>
<div class="t" style="left:1051px;top:350px;color:#ececec;font-size:15px">100%</div>
<svg class="a" style="left:1095px;top:352px" width="12" height="11" viewBox="0 0 12 11"><path d="M1 1 H11 L6 10 Z" fill="#e8e8e8"/></svg>
<div class="t" style="left:1116px;top:350px;color:#e8e8e8;font-size:15px">Khóa:</div>
<svg class="a" style="left:1156px;top:349px" width="80" height="20" viewBox="1156 349 80 20">
<rect x="1157.5" y="351.5" width="15" height="15" fill="#474747" stroke="#dcdcdc" stroke-width="1.2"/>
<g fill="#dcdcdc"><rect x="1158" y="352" width="3.5" height="3.5"/><rect x="1165" y="352" width="3.5" height="3.5"/><rect x="1161.5" y="355.5" width="3.5" height="3.5"/><rect x="1168.5" y="355.5" width="3.5" height="3.5"/><rect x="1158" y="359" width="3.5" height="3.5"/><rect x="1165" y="359" width="3.5" height="3.5"/><rect x="1161.5" y="362.5" width="3.5" height="3.5"/><rect x="1168.5" y="362.5" width="3.5" height="3.5"/></g>
<path d="M1193 350.5 L1196 353.5 L1189 361 L1186 358 Z" fill="#dcdcdc"/><path d="M1185.5 357.5 L1189.5 361.5 Q1188.5 366 1183 367.5 Q1181 368 1179 368 Q1179.5 365 1180.5 362.5 Q1182.5 358.5 1185.5 357.5 Z" fill="#dcdcdc"/>
<path d="M1206 350 V367 M1198 358.5 H1214 M1203.5 352.5 L1206 350 L1208.5 352.5 M1203.5 364.5 L1206 367 L1208.5 364.5 M1200.5 356 L1198 358.5 L1200.5 361 M1211.5 356 L1214 358.5 L1211.5 361" stroke="#dcdcdc" stroke-width="1.4" fill="none"/>
<path d="M1223 358 V354.5 Q1223 350.5 1227 350.5 Q1231 350.5 1231 354.5 V358" stroke="#dcdcdc" stroke-width="1.8" fill="none"/><rect x="1220" y="358" width="14" height="9.5" rx="1" fill="#dcdcdc"/>
</svg>
<div class="t" style="left:995px;top:380px;color:#e8e8e8;font-size:15px">Tô màu:</div>
<div class="a" style="left:1051px;top:375px;width:45.5px;height:25.5px;background:#2a2a2a;border-radius:3px"></div>
<div class="t" style="left:1055px;top:380px;color:#ececec;font-size:15px">100%</div>
<svg class="a" style="left:1099px;top:382px" width="12" height="11" viewBox="0 0 12 11"><path d="M1 1 H11 L6 10 Z" fill="#e8e8e8"/></svg>
<div class="a" style="left:993px;top:404.5px;width:278px;height:366.5px;background:#363636"></div>
<div class="a" style="left:993px;top:406.7px;width:278px;height:27px;background:#575757"></div>
<svg class="a" style="left:999.5px;top:414px" width="18" height="14" viewBox="0 0 18 14"><path d="M1.2 7 Q9 -1.5 16.8 7 Q9 15.5 1.2 7 Z" fill="none" stroke="#dcdcdc" stroke-width="1.8"/><circle cx="9" cy="6.8" r="3.2" fill="#dcdcdc"/><circle cx="8" cy="5.8" r="1" fill="#474747"/></svg>
<svg class="a" style="left:1023px;top:416px" width="17" height="11" viewBox="0 0 17 11"><path d="M1 1 H15.5 L8.25 9.5 Z" fill="#dcdcdc"/></svg>
<svg class="a" style="left:1042px;top:414px" width="20" height="14" viewBox="0 0 20 14"><path d="M1 1.5 H7.5 L9 3.5 H18 V13 H1 Z" fill="#dcdcdc"/></svg>
<div class="t" style="left:1071px;top:414px;color:#e6e6e6;font-size:15px">Trang 1</div>
<div class="a" style="left:993px;top:436px;width:278px;height:42px;background:#474747"></div>
<svg class="a" style="left:999.5px;top:450.5px" width="18" height="14" viewBox="0 0 18 14"><path d="M1.2 7 Q9 -1.5 16.8 7 Q9 15.5 1.2 7 Z" fill="none" stroke="#dcdcdc" stroke-width="1.8"/><circle cx="9" cy="6.8" r="3.2" fill="#dcdcdc"/><circle cx="8" cy="5.8" r="1" fill="#474747"/></svg>
<div class="a" style="left:1045.5px;top:438.5px;width:36px;height:36px;background:#fff;border:1px solid #151515;border-radius:2px"></div>
<div class="t" style="left:1054px;top:446px;width:20px;text-align:center;font-family:'Liberation Serif',serif;font-size:22px;color:#111">T</div>
<div class="t" style="left:1092px;top:450px;color:#e6e6e6;font-size:14px">GIẢM GIÁ 35%</div>
<div class="a" style="left:993px;top:480px;width:278px;height:42px;background:#474747"></div>
<svg class="a" style="left:999.5px;top:494.5px" width="18" height="14" viewBox="0 0 18 14"><path d="M1.2 7 Q9 -1.5 16.8 7 Q9 15.5 1.2 7 Z" fill="none" stroke="#dcdcdc" stroke-width="1.8"/><circle cx="9" cy="6.8" r="3.2" fill="#dcdcdc"/><circle cx="8" cy="5.8" r="1" fill="#474747"/></svg>
<div class="a" style="left:1045.5px;top:482.5px;width:36px;height:36px;background:#fff;border:1px solid #151515;border-radius:2px"></div>
<div class="t" style="left:1054px;top:490px;width:20px;text-align:center;font-family:'Liberation Serif',serif;font-size:22px;color:#111">T</div>
<div class="t" style="left:1092px;top:494px;color:#e6e6e6;font-size:14px">Hành lý đặc biệt</div>
<div class="a" style="left:993px;top:524px;width:278px;height:42px;background:#474747"></div>
<svg class="a" style="left:999.5px;top:538.5px" width="18" height="14" viewBox="0 0 18 14"><path d="M1.2 7 Q9 -1.5 16.8 7 Q9 15.5 1.2 7 Z" fill="none" stroke="#dcdcdc" stroke-width="1.8"/><circle cx="9" cy="6.8" r="3.2" fill="#dcdcdc"/><circle cx="8" cy="5.8" r="1" fill="#474747"/></svg>
<div class="a" style="left:1045.5px;top:526.5px;width:36px;height:36px;background:#fff;border:1px solid #151515;border-radius:2px"></div>
<div class="t" style="left:1054px;top:534px;width:20px;text-align:center;font-family:'Liberation Serif',serif;font-size:22px;color:#111">T</div>
<div class="t" style="left:1092px;top:538px;color:#e6e6e6;font-size:14px">ĐẶT BÂY GIỜ</div>
<div class="a" style="left:993px;top:568px;width:278px;height:42px;background:#474747"></div>
<svg class="a" style="left:999.5px;top:582.5px" width="18" height="14" viewBox="0 0 18 14"><path d="M1.2 7 Q9 -1.5 16.8 7 Q9 15.5 1.2 7 Z" fill="none" stroke="#dcdcdc" stroke-width="1.8"/><circle cx="9" cy="6.8" r="3.2" fill="#dcdcdc"/><circle cx="8" cy="5.8" r="1" fill="#474747"/></svg>
<div class="a" style="left:1045.5px;top:570.5px;width:36px;height:36px;background:#fff;border:1px solid #151515;border-radius:2px"></div>
<div class="t" style="left:1054px;top:578px;width:20px;text-align:center;font-family:'Liberation Serif',serif;font-size:22px;color:#111">T</div>
<div class="t" style="left:1092px;top:582px;color:#e6e6e6;font-size:14px">ồ</div>
<div class="a" style="left:993px;top:612px;width:278px;height:42px;background:#474747"></div>
<svg class="a" style="left:999.5px;top:626.5px" width="18" height="14" viewBox="0 0 18 14"><path d="M1.2 7 Q9 -1.5 16.8 7 Q9 15.5 1.2 7 Z" fill="none" stroke="#dcdcdc" stroke-width="1.8"/><circle cx="9" cy="6.8" r="3.2" fill="#dcdcdc"/><circle cx="8" cy="5.8" r="1" fill="#474747"/></svg>
<div class="a" style="left:1045.5px;top:614.5px;width:36px;height:36px;background:#fff;border:1px solid #151515;border-radius:2px"></div>
<div class="t" style="left:1054px;top:622px;width:20px;text-align:center;font-family:'Liberation Serif',serif;font-size:22px;color:#111">T</div>
<div class="t" style="left:1092px;top:626px;color:#e6e6e6;font-size:14px">t</div>
<div class="a" style="left:993px;top:656px;width:278px;height:42px;background:#474747"></div>
<svg class="a" style="left:999.5px;top:670.5px" width="18" height="14" viewBox="0 0 18 14"><path d="M1.2 7 Q9 -1.5 16.8 7 Q9 15.5 1.2 7 Z" fill="none" stroke="#dcdcdc" stroke-width="1.8"/><circle cx="9" cy="6.8" r="3.2" fill="#dcdcdc"/><circle cx="8" cy="5.8" r="1" fill="#474747"/></svg>
<div class="a" style="left:1045.5px;top:658.5px;width:36px;height:36px;background:#fff;border:1px solid #151515;border-radius:2px"></div>
<div class="t" style="left:1054px;top:666px;width:20px;text-align:center;font-family:'Liberation Serif',serif;font-size:22px;color:#111">T</div>
<div class="a" style="left:993px;top:700px;width:278px;height:42px;background:#474747"></div>
<svg class="a" style="left:999.5px;top:714.5px" width="18" height="14" viewBox="0 0 18 14"><path d="M1.2 7 Q9 -1.5 16.8 7 Q9 15.5 1.2 7 Z" fill="none" stroke="#dcdcdc" stroke-width="1.8"/><circle cx="9" cy="6.8" r="3.2" fill="#dcdcdc"/><circle cx="8" cy="5.8" r="1" fill="#474747"/></svg>
<div class="a" style="left:1045.5px;top:702.5px;width:36px;height:36px;background:#fff;border:1px solid #151515;border-radius:2px"></div>
<div class="t" style="left:1054px;top:710px;width:20px;text-align:center;font-family:'Liberation Serif',serif;font-size:22px;color:#111">T</div>
<div class="t" style="left:1092px;top:714px;color:#e6e6e6;font-size:14px">e</div>
<div class="a" style="left:993px;top:744px;width:278px;height:42px;background:#474747"></div>
<svg class="a" style="left:999.5px;top:758.5px" width="18" height="14" viewBox="0 0 18 14"><path d="M1.2 7 Q9 -1.5 16.8 7 Q9 15.5 1.2 7 Z" fill="none" stroke="#dcdcdc" stroke-width="1.8"/><circle cx="9" cy="6.8" r="3.2" fill="#dcdcdc"/><circle cx="8" cy="5.8" r="1" fill="#474747"/></svg>
<div class="a" style="left:1045.5px;top:746.5px;width:36px;height:36px;background:#fff;border:1px solid #151515;border-radius:2px"></div>
<div class="t" style="left:1054px;top:754px;width:20px;text-align:center;font-family:'Liberation Serif',serif;font-size:22px;color:#111">T</div>
<div class="t" style="left:1092px;top:758px;color:#e6e6e6;font-size:14px">tôi</div>
<div class="a" style="left:993px;top:771px;width:287px;height:33px;background:#474747"></div>
<div class="a" style="left:1271px;top:404.5px;width:9px;height:366.5px;background:#3a3a3a"></div>
<svg class="a" style="left:1090px;top:775px" width="190" height="25" viewBox="1090 775 190 25">
<g stroke="#dcdcdc" fill="none" stroke-width="2"><rect x="1094" y="783" width="7" height="6" rx="2"/><rect x="1103" y="783" width="7" height="6" rx="2"/><path d="M1099 786 H1105"/></g>
<text x="1118" y="794" font-family="Liberation Sans" font-size="16" fill="#dcdcdc" letter-spacing="-1.5">eff</text>
<path d="M1136 793 V796 H1133" stroke="#dcdcdc" stroke-width="1.2" fill="none"/>
<rect x="1147" y="778.5" width="17" height="13.5" fill="#dcdcdc"/><circle cx="1155.5" cy="785.2" r="3.4" fill="#474747"/>
<circle cx="1182.5" cy="786" r="7.5" fill="none" stroke="#dcdcdc" stroke-width="1.7"/><path d="M1182.5 778.5 A7.5 7.5 0 0 0 1182.5 793.5 Z" fill="#dcdcdc"/>
<path d="M1190 793 V796 H1187" stroke="#dcdcdc" stroke-width="1.2" fill="none"/>
<path d="M1201 780 H1207 L1209 782 H1218 V792 H1201 Z" fill="#dcdcdc"/>
<path d="M1228.5 778.5 H1245 V788.5 L1239 795 H1228.5 Z M1245 788.5 H1239 V795" stroke="#dcdcdc" stroke-width="1.5" fill="none"/>
<path d="M1255 780.5 Q1263.5 776 1272 780.5 L1270 794 Q1263.5 797 1257 794 Z" fill="#dcdcdc"/><ellipse cx="1263.5" cy="781" rx="7" ry="2" fill="#474747"/>
</svg>

<!-- FILE MENU -->
<div id="menu" class="a">
<div class="a" style="left:2.5px;top:214.5px;width:174.5px;height:34.5px;background:#bfe1f6"></div>
<div class="mi" style="top:10.6px">Mới...</div>
<div class="sc" style="top:10.6px">Alt+Ctrl + N</div>
<div class="mi" style="top:43.6px">Mở...</div>
<div class="sc" style="top:43.6px">Ctrl + O</div>
<div class="mi" style="top:76.6px">Insert image...</div>
<div class="mi" style="top:109.6px">Open Add</div>
<div class="arr" style="top:113.1px"></div>
<div class="mi" style="top:150.6px">Chia sẻ</div>
<div class="arr" style="top:154.1px"></div>
<div class="mi" style="top:191.6px;color:#c4c4c4">Lưu</div>
<div class="sc" style="top:191.6px;color:#d0d0d0">Ctrl + S</div>
<div class="mi" style="top:224.6px;color:#17303d">Save under as PSD</div>
<div class="mi" style="top:257.6px">Save Add</div>
<div class="arr" style="top:261.1px"></div>
<div class="mi" style="top:290.6px">Xuất dưới dạng</div>
<div class="arr" style="top:294.1px"></div>
<div class="mi" style="top:323.6px">TRONG...</div>
<div class="mi" style="top:364.6px">Xuất các lớp...</div>
<div class="mi" style="top:397.6px">Xuất tra cứu màu...</div>
<div class="mi" style="top:438.6px">File thông tin...</div>
<div class="mi" style="top:479.6px">Tự động hóa</div>
<div class="arr" style="top:483.1px"></div>
<div class="mi" style="top:512.6px">Bản chỉnh sửa...</div>
<div class="sep" style="top:136.0px"></div>
<div class="sep" style="top:177.0px"></div>
<div class="sep" style="top:350.0px"></div>
<div class="sep" style="top:424.0px"></div>
<div class="sep" style="top:465.0px"></div>
</div>
<div class="a" style="left:7px;top:236px;width:185px;height:45.5px;border:5px solid #e8121a;border-radius:2px"></div>
</body></html>
